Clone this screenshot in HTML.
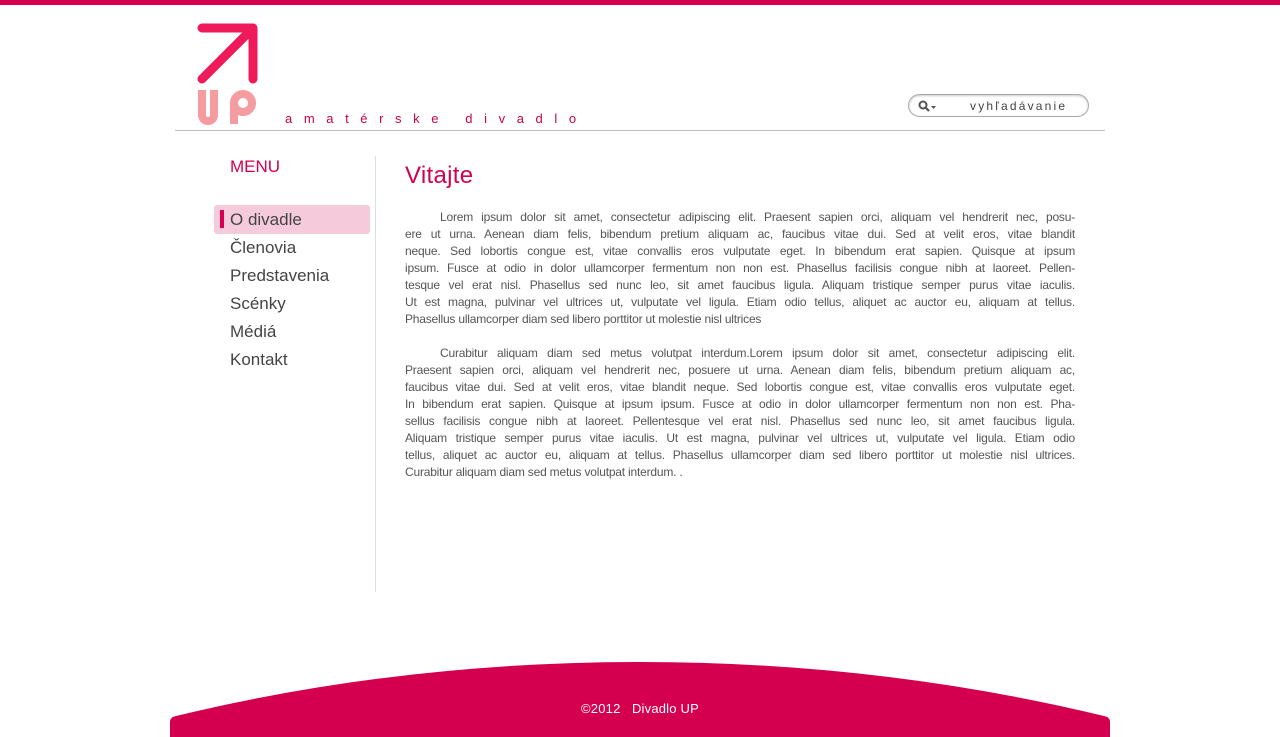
<!DOCTYPE html>
<html><head><meta charset="utf-8"><style>
*{margin:0;padding:0;box-sizing:border-box}
body{width:1280px;height:737px;overflow:hidden;background:#fff;font-family:"Liberation Sans",sans-serif;position:relative}
.top{position:absolute;left:0;top:0;width:1280px;height:5px;background:#d4004f}
.hl{position:absolute;left:175px;top:130px;width:930px;height:1px;background:#bbb}
.tag{position:absolute;left:285px;top:111px;font-size:13px;color:#c8004f;letter-spacing:11.6px;white-space:nowrap}
.search{position:absolute;left:908px;top:94px;width:181px;height:23px;border:1px solid #aaa;border-radius:12px;box-shadow:inset 0 1px 2px #ccc}
.search span{position:absolute;left:61px;top:4px;font-size:12px;color:#444;letter-spacing:2.2px}
.menuh{position:absolute;left:230px;top:157px;font-size:17px;color:#d4004f}
.menu{position:absolute;left:230px;top:205px}
.menu div{height:28px;line-height:29px;font-size:17px;color:#444;letter-spacing:0}
.act{position:absolute;left:214px;top:205px;width:156px;height:29px;background:#f5cadb;border-radius:3px}
.bar{position:absolute;left:220px;top:210px;width:4px;height:18px;background:#d4004f}
.vd{position:absolute;left:375px;top:156px;width:1px;height:436px;background:#ddd}
h1{position:absolute;left:405px;top:162px;font-size:24px;font-weight:normal;color:#d4004f;letter-spacing:.3px}
.txt{position:absolute;left:405px;top:209px;width:670px;font-size:12px;color:#555;line-height:17px;letter-spacing:-.2px}
.txt div{text-align:justify;text-align-last:justify;white-space:nowrap;overflow:hidden}
.txt div.l{text-align-last:left}
.txt div.i{padding-left:35px}
.gap{height:17px}
.foot{position:absolute;left:0;top:0}
.ft{position:absolute;left:0;width:1280px;top:701px;text-align:center;color:#fff;font-size:13px;letter-spacing:.2px}
</style></head><body>
<div class="top"></div>
<svg style="position:absolute;left:190px;top:18px" width="80" height="110">
<path d="M12 10 H63 V61 M63 10 L12 61" stroke="#ef1a5a" stroke-width="9" fill="none" stroke-linecap="round" stroke-linejoin="round"/>
<path d="M12 72 V97 a6 6 0 0 0 12 0 V72" stroke="#f49ca0" stroke-width="8" fill="none"/>
<circle cx="53" cy="85" r="9" stroke="#f49ca0" stroke-width="8" fill="none"/>
<path d="M44 84 V106" stroke="#f49ca0" stroke-width="8"/>
</svg>
<div class="tag">amatérske divadlo</div>
<div class="search"><svg style="position:absolute;left:9px;top:5px" width="20" height="14"><circle cx="5" cy="5" r="3.5" stroke="#555" stroke-width="2" fill="none"/><path d="M7.5 7.5 L11 11" stroke="#555" stroke-width="2.2"/><path d="M13 6 h5 l-2.5 3z" fill="#555"/></svg><span>vyhľadávanie</span></div>
<div class="hl"></div>
<div class="menuh">MENU</div>
<div class="act"></div><div class="bar"></div>
<div class="menu"><div>O divadle</div><div>Členovia</div><div>Predstavenia</div><div>Scénky</div><div>Médiá</div><div>Kontakt</div></div>
<div class="vd"></div>
<h1>Vitajte</h1>
<div class="txt">
<div class="i">Lorem ipsum dolor sit amet, consectetur adipiscing elit. Praesent sapien orci, aliquam vel hendrerit nec, posu-</div>
<div>ere ut urna. Aenean diam felis, bibendum pretium aliquam ac, faucibus vitae dui. Sed at velit eros, vitae blandit</div>
<div>neque. Sed lobortis congue est, vitae convallis eros vulputate eget. In bibendum erat sapien. Quisque at ipsum</div>
<div>ipsum. Fusce at odio in dolor ullamcorper fermentum non non est. Phasellus facilisis congue nibh at laoreet. Pellen-</div>
<div>tesque vel erat nisl. Phasellus sed nunc leo, sit amet faucibus ligula. Aliquam tristique semper purus vitae iaculis.</div>
<div>Ut est magna, pulvinar vel ultrices ut, vulputate vel ligula. Etiam odio tellus, aliquet ac auctor eu, aliquam at tellus.</div>
<div class="l">Phasellus ullamcorper diam sed libero porttitor ut molestie nisl ultrices</div>
<div class="gap"></div>
<div class="i">Curabitur aliquam diam sed metus volutpat interdum.Lorem ipsum dolor sit amet, consectetur adipiscing elit.</div>
<div>Praesent sapien orci, aliquam vel hendrerit nec, posuere ut urna. Aenean diam felis, bibendum pretium aliquam ac,</div>
<div>faucibus vitae dui. Sed at velit eros, vitae blandit neque. Sed lobortis congue est, vitae convallis eros vulputate eget.</div>
<div>In bibendum erat sapien. Quisque at ipsum ipsum. Fusce at odio in dolor ullamcorper fermentum non non est. Pha-</div>
<div>sellus facilisis congue nibh at laoreet. Pellentesque vel erat nisl. Phasellus sed nunc leo, sit amet faucibus ligula.</div>
<div>Aliquam tristique semper purus vitae iaculis. Ut est magna, pulvinar vel ultrices ut, vulputate vel ligula. Etiam odio</div>
<div>tellus, aliquet ac auctor eu, aliquam at tellus. Phasellus ullamcorper diam sed libero porttitor ut molestie nisl ultrices.</div>
<div class="l">Curabitur aliquam diam sed metus volutpat interdum. .</div>
</div>
<svg class="foot" width="1280" height="737"><path d="M170 722 Q170 717 176 716 Q400 662 640 662 Q880 662 1104 716 Q1110 717 1110 722 V737 H170Z" fill="#d4004f"/></svg>
<div class="ft">©2012 &nbsp; Divadlo UP</div>
</body></html>
